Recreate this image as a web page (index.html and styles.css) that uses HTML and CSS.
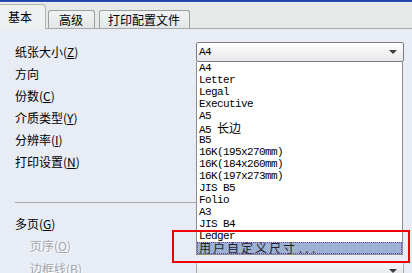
FILE: index.html
```html
<!DOCTYPE html>
<html>
<head>
<meta charset="utf-8" />
<title>打印设置</title>
<link rel="stylesheet" href="styles.css">
</head>
<body>
<div class="topbar"></div>
<div class="tabs">
	<div class="tab active">基本</div>
	<div class="tab">高级</div>
	<div class="tab wide">打印配置文件</div>
</div>
<div class="panel">
	<div class="row">
		<div class="label">纸张大小(<u>Z</u>)</div>
		<div class="combo"><span>A4</span><i class="arrow"></i></div>
	</div>
	<div class="row"><div class="label">方向</div></div>
	<div class="row"><div class="label">份数(<u>C</u>)</div></div>
	<div class="row"><div class="label">介质类型(<u>Y</u>)</div></div>
	<div class="row"><div class="label">分辨率(<u>I</u>)</div></div>
	<div class="row"><div class="label">打印设置(<u>N</u>)</div></div>

	<div class="sep"></div>

	<div class="row"><div class="label">多页(<u>G</u>)</div></div>
	<div class="row sub"><div class="label off">页序(<u>O</u>)</div></div>
	<div class="row sub">
		<div class="label off">边框线(<u>B</u>)</div>
		<div class="combo dim"><span></span><i class="arrow"></i></div>
	</div>

	<ul class="list">
		<li>A4</li>
		<li>Letter</li>
		<li>Legal</li>
		<li>Executive</li>
		<li>A5</li>
		<li>A5 <span class="cjk">长边</span></li>
		<li>B5</li>
		<li>16K(195x270mm)</li>
		<li>16K(184x260mm)</li>
		<li>16K(197x273mm)</li>
		<li>JIS B5</li>
		<li>Folio</li>
		<li>A3</li>
		<li>JIS B4</li>
		<li>Ledger</li>
		<li class="sel"><span class="cjk">用户自定义尺寸</span>...</li>
	</ul>
	<div class="mark"></div>
</div>
</body>
</html>
```

FILE: styles.css
```css
html, body {
	margin: 0;
	padding: 0;
}
body {
	width: 412px;
	height: 273px;
	overflow: hidden;
	background: #e8ecf4;
	font-family: "Noto Sans CJK SC", "Liberation Sans", sans-serif;
	font-size: 12px;
	color: #000;
}
.topbar {
	height: 2px;
	background: linear-gradient(#1c3c9c, #2a54c4);
}
.tabs {
	display: flex;
	align-items: flex-end;
	height: 26px;
	background: #e5e9e8;
	border-bottom: 1px solid #a5a8a8;
}
.tab {
	height: 17px;
	line-height: 17px;
	padding: 0 11px 0 10px;
	margin-left: 2px;
	border: 1px solid #98a0a0;
	border-bottom: none;
	border-radius: 3px 3px 0 0;
	background: linear-gradient(#f2f4f4, #e2e6e6);
}
.tab.wide {
	margin-left: 4px;
	padding: 0 9px 0 8px;
}
.tab.active {
	margin-left: 0;
	height: 24px;
	line-height: 24px;
	padding: 0 13px 0 8px;
	margin-bottom: -1px;
	border-left: none;
	border-color: #b0b6b6;
	background: #eef1f2;
	border-radius: 0 4px 0 0;
}
.panel {
	position: relative;
	padding: 12px 0 0 15px;
}
.row {
	display: flex;
	align-items: center;
	height: 22px;
}
.row.sub {
	height: 22.5px;
}
.label {
	width: 181px;
	line-height: 14px;
	white-space: nowrap;
}
.sub .label {
	padding-left: 15px;
	width: 166px;
}
.label u {
	text-underline-offset: 1px;
}
.label.off {
	color: #a3a6ab;
	text-shadow: 1px 1px 0 #fff;
}
.combo {
	position: relative;
	width: 204px;
	height: 18px;
	border: 1px solid #7c7e82;
	border-radius: 2px;
	background: linear-gradient(#ffffff, #e6e7e9);
	font-family: "Liberation Mono", "Noto Sans CJK SC", monospace;
	font-size: 11px;
	letter-spacing: -0.6px;
	line-height: 18px;
	padding-left: 2px;
}
.combo.dim {
	margin-top: 4px;
	border-color: #a9acb0;
	background: linear-gradient(#f4f5f7, #e3e5e8);
}
.arrow {
	position: absolute;
	right: 6px;
	top: 7px;
	width: 0;
	height: 0;
	border-left: 4px solid transparent;
	border-right: 4px solid transparent;
	border-top: 4px solid #3a3a3a;
}
.sep {
	height: 1px;
	margin: 29px 0 10px 0;
	background: #a5a7aa;
	width: 195px;
}
.list {
	position: absolute;
	left: 196px;
	top: 33px;
	width: 205px;
	margin: 0;
	padding: 0;
	list-style: none;
	background: #fff;
	border: 1px solid #8a8d92;
	border-top: none;
	font-family: "Liberation Mono", "Noto Sans CJK SC", monospace;
	font-size: 11px;
	letter-spacing: -0.6px;
	color: #000;
}
.list li {
	height: 12px;
	line-height: 12px;
	padding-left: 2px;
	white-space: nowrap;
}
.list .cjk {
	font-family: "Noto Sans CJK SC", sans-serif;
	font-size: 12px;
	line-height: 12px;
	letter-spacing: 0;
}
.list li.sel {
	background: #9cb1d3;
	outline: 1px dotted #6a3fa8;
	outline-offset: -1px;
	color: #20202c;
	letter-spacing: 0;
}
.list li.sel .cjk {
	letter-spacing: 2px;
}
.mark {
	position: absolute;
	left: 172px;
	top: 201px;
	width: 234px;
	height: 29px;
	border: 2px solid #ee0000;
}
```
